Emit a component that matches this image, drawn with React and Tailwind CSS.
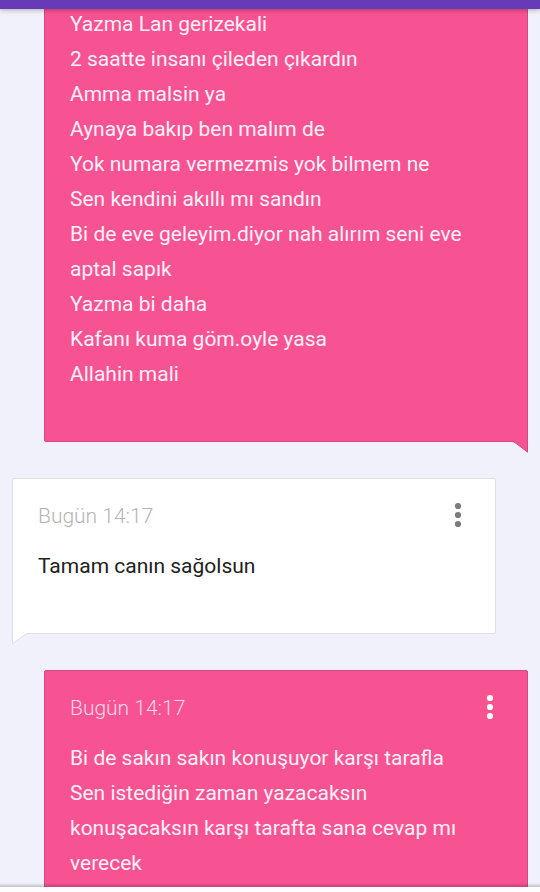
import React from 'react';

const messages = [
  {
    id: 1,
    mine: true,
    lines: [
      'Yazma Lan gerizekali',
      '2 saatte insanı çileden çıkardın',
      'Amma malsin ya',
      'Aynaya bakıp ben malım de',
      'Yok numara vermezmis yok bilmem ne',
      'Sen kendini akıllı mı sandın',
      'Bi de eve geleyim.diyor nah alırım seni eve aptal sapık',
      'Yazma bi daha',
      'Kafanı kuma göm.oyle yasa',
      'Allahin mali',
    ],
  },
  {
    id: 2,
    mine: false,
    time: 'Bugün 14:17',
    lines: ['Tamam canın sağolsun'],
  },
  {
    id: 3,
    mine: true,
    time: 'Bugün 14:17',
    lines: [
      'Bi de sakın sakın konuşuyor karşı tarafla',
      'Sen istediğin zaman yazacaksın',
      'konuşacaksın karşı tarafta sana cevap mı verecek',
    ],
  },
];

const MoreIcon = () => (
  <svg viewBox="0 0 8 26" className="w-2 h-[26px]" fill="currentColor" aria-hidden="true">
    <circle cx="4" cy="4" r="3.1" />
    <circle cx="4" cy="13" r="3.1" />
    <circle cx="4" cy="22" r="3.1" />
  </svg>
);

// Corner tail, overlaps the bottom border of the bubble
const Tail = ({ mine }) =>
  mine ? (
    <svg viewBox="0 0 18 12" className="absolute -right-px top-full w-[18px] h-3" aria-hidden="true">
      <path d="M0 0H18V11.5L5 1.6Q3.5 .5 1 .5H0Z" fill="#f75292" />
      <path d="M0 .5H1Q3.5 .5 5 1.6L17.5 11V0" fill="none" stroke="#cf4a83" />
    </svg>
  ) : (
    <svg viewBox="0 0 18 12" className="absolute -left-px top-full w-[18px] h-3" aria-hidden="true">
      <path d="M18 0H0V11.5L13 1.6Q14.500 .5 17 .5H18Z" fill="#ffffff" />
      <path d="M18 .5H17Q14.500 .5 13 1.6L.5 11V0" fill="none" stroke="#dcdce2" />
    </svg>
  );

const Message = ({ message }) => {
  const { mine, time, lines } = message;

  return (
    <li
      className={
        mine
          ? 'relative ml-11 mr-3 px-[25px] pb-[49px] rounded-[2px] border border-[#cf4a83] bg-[#f75292] text-[#fff0f6]'
          : 'relative ml-3 mr-11 px-[25px] pb-[49px] rounded-[2px] border border-[#dfdfe6] bg-white text-[#212121]'
      }
    >
      {time && (
        <div className="flex items-center justify-between pt-5 pb-[15px]">
          <time className={mine ? 'font-light text-[#ffd9e8]' : 'font-light text-[#b4b4b4]'}>{time}</time>
          <button
            type="button"
            aria-label="Mesaj seçenekleri"
            className={mine ? 'w-6 mb-1 flex justify-center text-white' : 'w-6 mb-1 flex justify-center text-[#7c7c7c]'}
          >
            <MoreIcon />
          </button>
        </div>
      )}
      {lines.map((line) => (
        <p key={line}>{line}</p>
      ))}
      <Tail mine={mine} />
    </li>
  );
};

export default function App() {
  return (
    <div className="flex flex-col h-screen overflow-hidden bg-[#f1f1fb] font-['Roboto',sans-serif] text-[21px] leading-[35px]">
      <header className="relative z-10 h-[9px] shrink-0 bg-[#673ab7] shadow-[0_1px_5px_rgba(0,0,0,0.3)]" />
      <main className="relative flex-1 min-h-0 overflow-hidden">
        <ul className="-mt-[3px] flex flex-col gap-9">
          {messages.map((message) => (
            <Message key={message.id} message={message} />
          ))}
        </ul>
        <div className="absolute inset-x-0 bottom-0 h-1 bg-linear-to-b from-transparent to-black/20" />
      </main>
      <footer className="h-[5px] shrink-0 bg-[#fdfdfd]" />
    </div>
  );
}
